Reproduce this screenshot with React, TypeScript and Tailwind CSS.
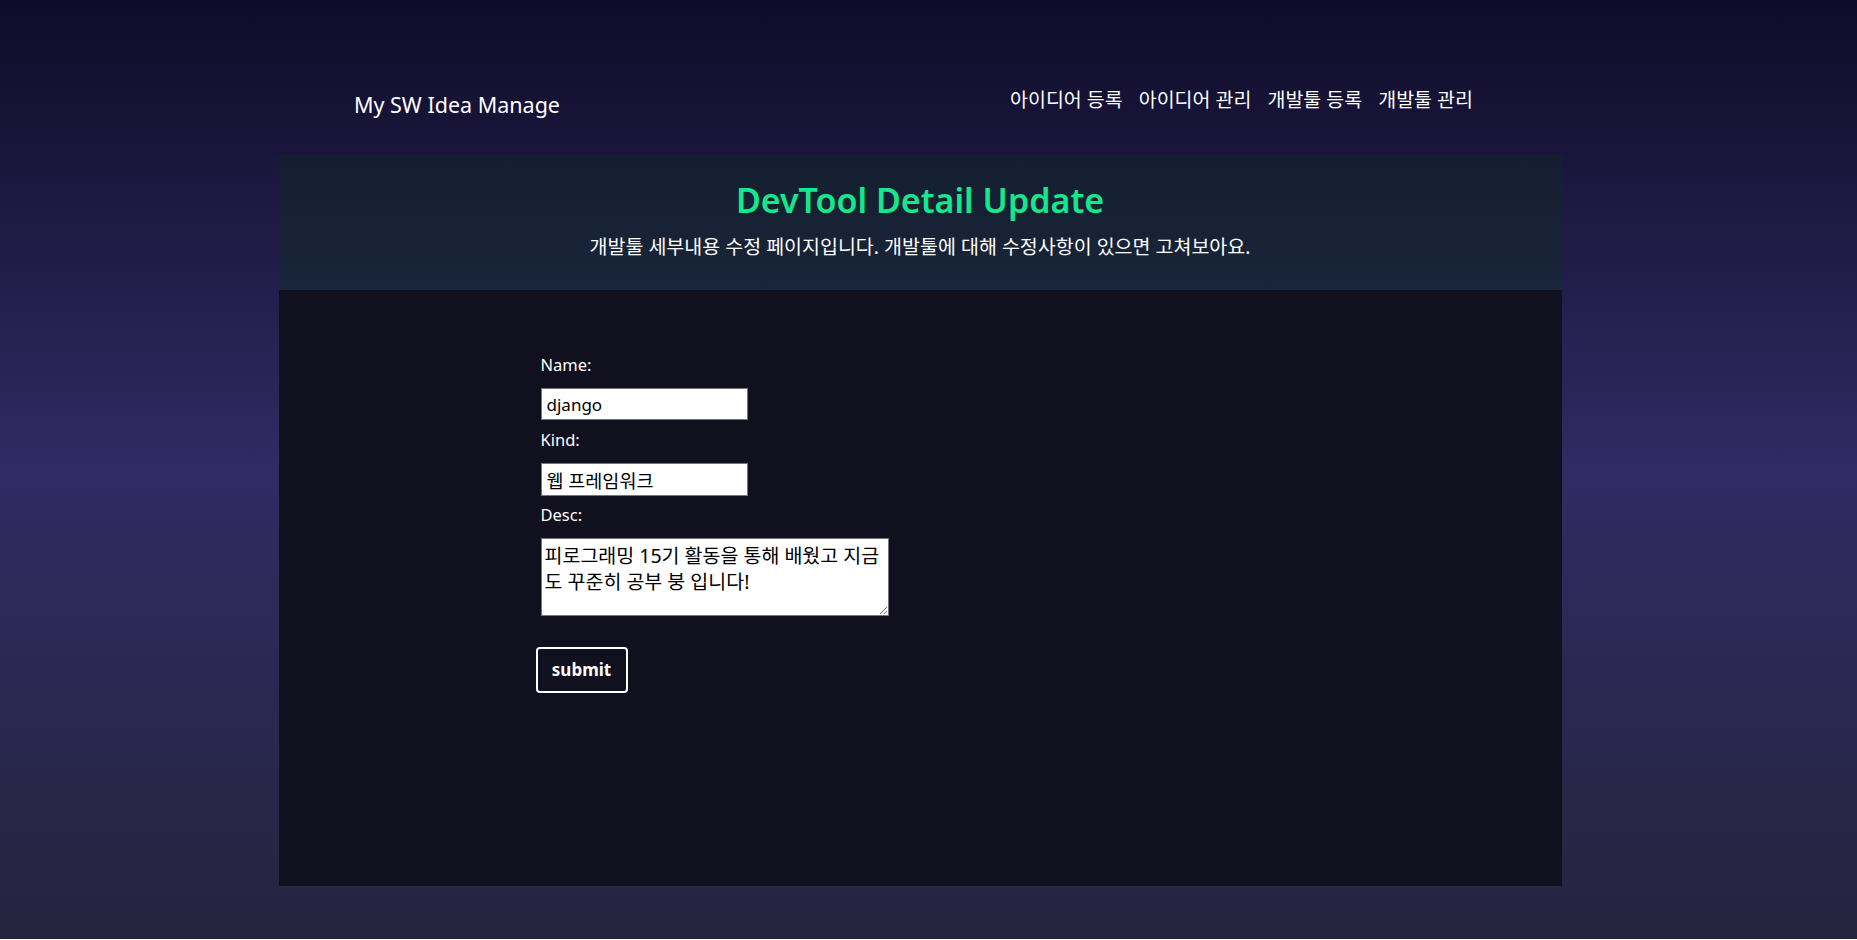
import { useState } from 'react'

const navItems = ['아이디어 등록', '아이디어 관리', '개발툴 등록', '개발툴 관리']

export default function App() {
  const [name, setName] = useState('django')
  const [kind, setKind] = useState('웹 프레임워크')
  const [desc, setDesc] = useState('피로그래밍 15기 활동을 통해 배웠고 지금도 꾸준히 공부 붕 입니다!')

  return (
    <div className="h-[940px] w-full overflow-hidden bg-white font-['Noto_Sans','Noto_Sans_CJK_KR',sans-serif]">
      <div className="h-[939px] w-full bg-gradient-to-b from-[#0f0c29] via-[#302b63] to-[#24243e]">
        <div className="w-[1840px]">
          <header className="flex h-[155px] items-start">
            <a className="ml-[354px] mt-[89px] text-[21.5px] leading-[32px] text-white">My SW Idea Manage</a>
            <nav className="ml-auto mr-[367px] mt-[86px] flex gap-[16px] text-[19.5px] leading-[28px] text-white">
              {navItems.map((n) => (
                <a key={n}>{n}</a>
              ))}
            </nav>
          </header>

          <main className="mx-auto w-[1283px]">
            <section className="flex h-[135px] flex-col items-center bg-gradient-to-b from-[#141e30] to-[#19253a] pt-[22px]">
              <h1 className="text-[34px] font-semibold leading-[46px] text-[#14e88c]">DevTool Detail Update</h1>
              <p className="mt-[10px] text-[19.5px] leading-[28px] text-white">
                개발툴 세부내용 수정 페이지입니다. 개발툴에 대해 수정사항이 있으면 고쳐보아요.
              </p>
            </section>

            <section className="h-[596px] bg-[#11101f] pl-[262px] pt-[64px]">
              <form className="flex flex-col items-start text-white" onSubmit={(e) => e.preventDefault()}>
                <label className="mb-[12px] text-[16.5px] leading-[22px]">Name:</label>
                <input
                  value={name}
                  onChange={(e) => setName(e.target.value)}
                  className="h-[32px] w-[207px] border border-[#767676] bg-white px-[5px] text-[17px] text-black outline-none"
                />
                <label className="mb-[12px] mt-[9px] text-[16.5px] leading-[22px]">Kind:</label>
                <input
                  value={kind}
                  onChange={(e) => setKind(e.target.value)}
                  className="h-[33px] w-[207px] border border-[#767676] bg-white px-[5px] text-[18.5px] text-black outline-none"
                />
                <label className="mb-[12px] mt-[8px] text-[16.5px] leading-[22px]">Desc:</label>
                <textarea
                  value={desc}
                  onChange={(e) => setDesc(e.target.value)}
                  className="h-[78px] w-[348px] border border-[#767676] bg-white px-[3px] pt-[4px] text-[19.5px] leading-[26px] text-black outline-none"
                />
                <button
                  type="submit"
                  className="-ml-[5px] mt-[31px] h-[46px] w-[92px] rounded-[4px] border-2 border-white text-[17px] font-bold text-white"
                >
                  submit
                </button>
              </form>
            </section>
          </main>
        </div>
      </div>
    </div>
  )
}
